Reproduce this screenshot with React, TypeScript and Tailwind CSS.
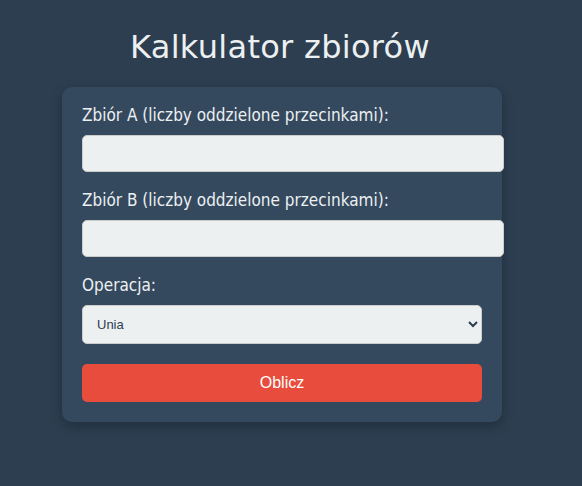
export default function App() {
  return (
    <div className="min-h-[486px] bg-[#2c3e50] text-[#ecf0f1] pr-[18px] flex flex-col items-center pt-[28px] font-['DejaVu_Sans_Condensed','DejaVu_Sans',sans-serif]">
      <h1 className="text-[32px] leading-[38px] tracking-[0.3px] font-['DejaVu_Sans',sans-serif] mb-[21px] pr-[4px]">
        Kalkulator zbiorów
      </h1>
      <div className="w-[440px] bg-[#34495e] rounded-[10px] p-5 shadow-[0_4px_12px_rgba(0,0,0,0.25)]">
        <label className="block text-[17px] leading-[16px] mb-[12px]">Zbiór A (liczby oddzielone przecinkami):</label>
        <input
          type="text"
          className="block w-[422px] h-[37px] rounded-[5px] bg-[#ecf0f1] border border-[#ccc] mb-[20px] text-[#2c3e50] px-[10px]"
        />
        <label className="block text-[17px] leading-[16px] mb-[12px]">Zbiór B (liczby oddzielone przecinkami):</label>
        <input
          type="text"
          className="block w-[422px] h-[37px] rounded-[5px] bg-[#ecf0f1] border border-[#ccc] mb-[20px] text-[#2c3e50] px-[10px]"
        />
        <label className="block text-[17px] leading-[16px] mb-[12px]">Operacja:</label>
        <select className="block w-full h-[39px] rounded-[5px] bg-[#ecf0f1] border border-[#ccc] text-[#2c3e50] text-[13px] font-['Liberation_Sans',sans-serif] pl-[10px] pr-[6px]">
          <option>Unia</option>
        </select>
        <button className="mt-[20px] w-full h-[38px] rounded-[5px] bg-[#e74c3c] text-white text-base font-['Liberation_Sans',sans-serif]">
          Oblicz
        </button>
      </div>
    </div>
  );
}
